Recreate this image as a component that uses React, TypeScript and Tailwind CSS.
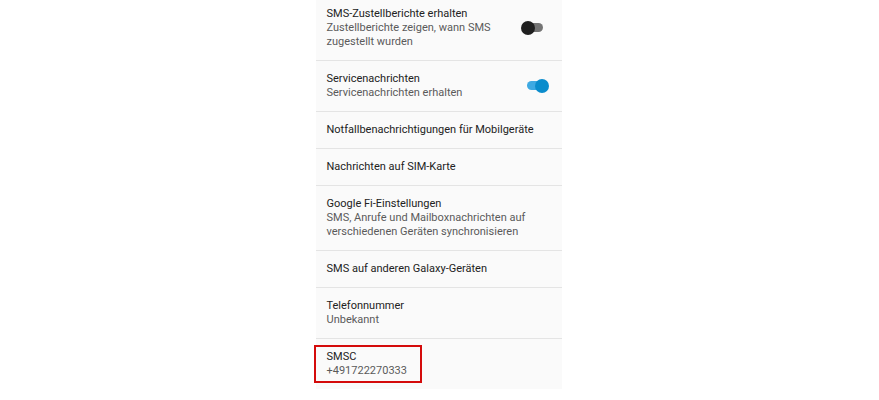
const rows: { title: string; lines?: string[]; toggle?: 'on' | 'off'; boxed?: boolean }[] = [
  { title: 'SMS-Zustellberichte erhalten', lines: ['Zustellberichte zeigen, wann SMS', 'zugestellt wurden'], toggle: 'off' },
  { title: 'Servicenachrichten', lines: ['Servicenachrichten erhalten'], toggle: 'on' },
  { title: 'Notfallbenachrichtigungen für Mobilgeräte' },
  { title: 'Nachrichten auf SIM-Karte' },
  { title: 'Google Fi-Einstellungen', lines: ['SMS, Anrufe und Mailboxnachrichten auf', 'verschiedenen Geräten synchronisieren'] },
  { title: 'SMS auf anderen Galaxy-Geräten' },
  { title: 'Telefonnummer', lines: ['Unbekannt'] },
  { title: 'SMSC', lines: ['+491722270333'], boxed: true },
];

function Toggle({ on }: { on: boolean }) {
  return (
    <div className="relative h-[14px] w-[28px] shrink-0">
      <div
        className={
          on
            ? 'absolute left-[6px] top-[2.5px] h-[9px] w-[16px] rounded-full bg-[#3ea9e2]'
            : 'absolute left-[6px] top-[2.5px] h-[9px] w-[16px] rounded-full bg-[#747474]'
        }
      />
      <div
        className={
          on
            ? 'absolute right-0 top-0 h-[14px] w-[14px] rounded-full bg-[#0a8ccc]'
            : 'absolute left-0 top-0 h-[14px] w-[14px] rounded-full bg-[#1f1f1f]'
        }
      />
    </div>
  );
}

export default function App() {
  return (
    <div className="flex h-[400px] w-full justify-center overflow-hidden bg-white font-['Roboto',sans-serif]">
      <div className="ml-[-2px] h-[389px] w-[246px] bg-[#fafafa]">
        <div className="-mt-[4px]">
          {rows.map((r, i) => (
            <div
              key={r.title}
              className={
                i < rows.length - 1
                  ? 'flex items-center border-b border-[#e4e4e4] pb-[11px] pl-[11px] pr-[13px] pt-[10px]'
                  : 'flex items-center pb-[11px] pl-[11px] pr-[13px] pt-[10px]'
              }
            >
              <div className="relative min-w-0 flex-1">
                {r.boxed && (
                  <div className="absolute -left-[13px] -top-[4px] h-[38px] w-[108px] border-2 border-[#d40b0b]" />
                )}
                <div className="text-[11px] leading-[15px] text-[#222222]">{r.title}</div>
                {r.lines?.map((l) => (
                  <div key={l} className="text-[11px] leading-[14px] text-[#5a5a5a]">
                    {l}
                  </div>
                ))}
              </div>
              {r.toggle && <Toggle on={r.toggle === 'on'} />}
            </div>
          ))}
        </div>
      </div>
    </div>
  );
}
